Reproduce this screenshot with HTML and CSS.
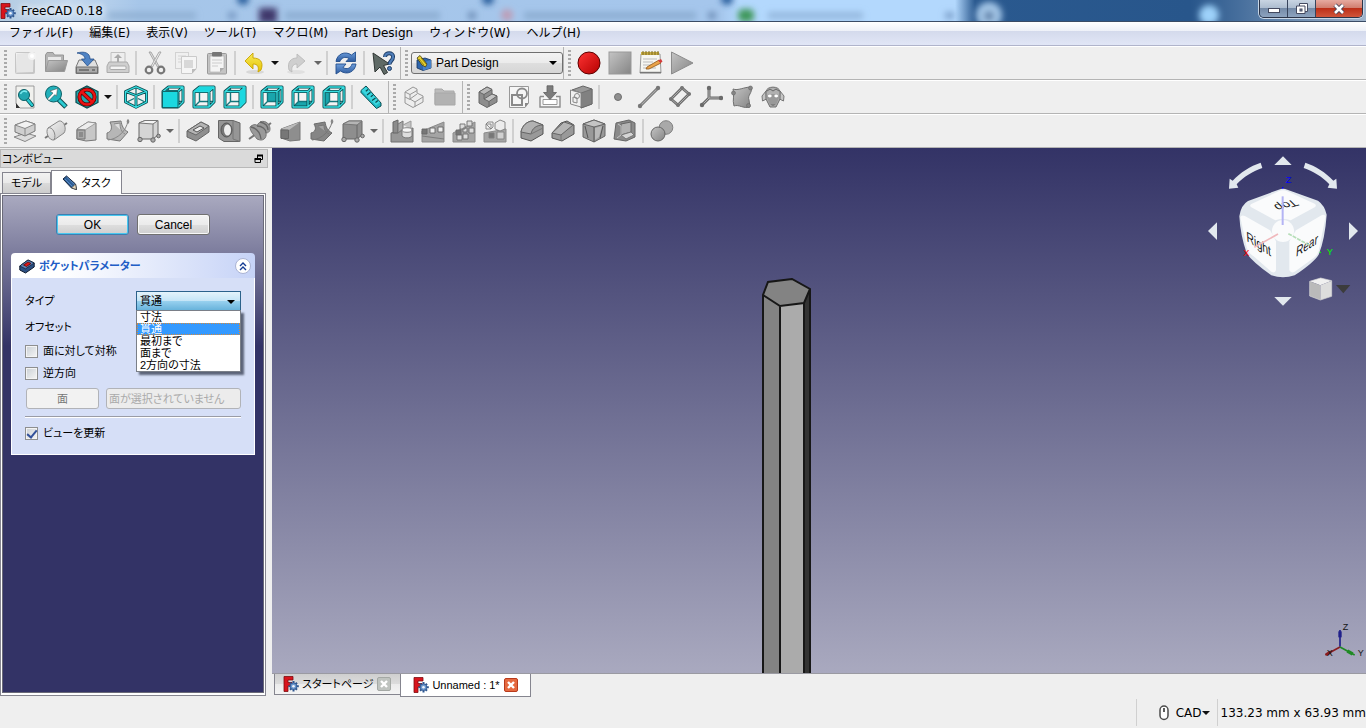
FILE: index.html
```html
<!DOCTYPE html>
<html lang="ja">
<head>
<meta charset="utf-8">
<title>FreeCAD 0.18</title>
<link rel="stylesheet" href="styles.css">
</head>
<body>
<svg class="defs" aria-hidden="true">
  <defs>
    <linearGradient id="gGrey" x1="0" y1="0" x2="1" y2="1"><stop offset="0" stop-color="#c4c4c4"/><stop offset="1" stop-color="#858585"/></linearGradient>
    <linearGradient id="gLight" x1="0" y1="0" x2="1" y2="1"><stop offset="0" stop-color="#f4f4f4"/><stop offset="1" stop-color="#c2c2c2"/></linearGradient>
    <linearGradient id="gRed" x1="0" y1="0" x2="1" y2="1"><stop offset="0" stop-color="#ff3434"/><stop offset="1" stop-color="#b40000"/></linearGradient>
    <linearGradient id="gBlue" x1="0" y1="0" x2="0" y2="1"><stop offset="0" stop-color="#6f9fdc"/><stop offset="1" stop-color="#2c5a9e"/></linearGradient>
    <linearGradient id="gYellow" x1="0" y1="0" x2="0" y2="1"><stop offset="0" stop-color="#f7ea5c"/><stop offset="1" stop-color="#e6c400"/></linearGradient>
    <symbol id="frame" viewBox="0 0 24 24">
      <g fill="none" stroke-linejoin="round">
        <path d="M7.500 4V16.500H21M3 21L7.500 16.500" stroke="#14777c" stroke-width="1.400"/>
        <path d="M2 6.500L7.500 2H22V17L17 22H2ZM2 6.500H17V22M17 6.500L22 2" stroke="#0a4a4e" stroke-width="3"/>
        <path d="M2 6.500L7.500 2H22V17L17 22H2ZM2 6.500H17V22M17 6.500L22 2" stroke="#36dfe2" stroke-width="1.300"/>
      </g>
    </symbol>
    <symbol id="logo" viewBox="0 0 16 16">
      <path d="M1 .5H10V4H5V6.500H9V10H5V15.500H1Z" fill="#d8141c" stroke="#7c0d10" stroke-width=".8"/>
      <g stroke="#2e568f" stroke-width="2"><path d="M10.500 5V15.500M5.500 10.200H15.800M7 6.700L14 13.800M14 6.700L7 13.800"/></g>
      <circle cx="10.500" cy="10.200" r="3.300" fill="#6b97ce" stroke="#2e568f" stroke-width=".8"/><circle cx="10.500" cy="10.200" r="1.300" fill="#eef3fa"/>
    </symbol>
    <symbol id="closeX" viewBox="0 0 10 10"><path d="M2 2L8 8M8 2L2 8" stroke="#fff" stroke-width="2.400"/></symbol>
  </defs>
</svg>

<header class="titlebar">
  <svg class="glass" aria-hidden="true">
    <defs><filter id="soft" x="-20%" y="-60%" width="140%" height="220%"><feGaussianBlur stdDeviation="3"/></filter></defs>
    <g filter="url(#soft)">
      <circle cx="243" cy="-1" r="6" fill="#2c5f9d"/><circle cx="488" cy="-1" r="6" fill="#2c5f9d"/><circle cx="727" cy="-1" r="6" fill="#2c5f9d"/>
      <rect x="259" y="8" width="18" height="15" fill="#3f386c"/>
      <rect x="108" y="12" width="88" height="7" fill="#86a6cb" opacity=".7"/><rect x="228" y="12" width="8" height="7" fill="#7799c2"/>
      <rect x="285" y="12" width="155" height="7" fill="#86a6cb" opacity=".8"/><rect x="468" y="12" width="8" height="7" fill="#6f8fb8"/>
      <circle cx="507" cy="15" r="6" fill="#bd9db6"/><rect x="524" y="12" width="172" height="7" fill="#86a6cb" opacity=".8"/><rect x="708" y="12" width="8" height="7" fill="#6f8fb8"/>
      <rect x="738" y="9" width="16" height="13" rx="5" fill="#3f985c"/><rect x="768" y="12" width="95" height="7" fill="#8db0d6" opacity=".8"/><rect x="945" y="12" width="9" height="7" fill="#7fa3cd"/>
      <circle cx="989" cy="15" r="13" fill="#a5c7e8"/><circle cx="989" cy="16" r="5" fill="#5e80a8"/>
      <circle cx="1209" cy="15" r="10" fill="#9dd2fa"/>
    </g>
  </svg>
  <svg class="app-logo" viewBox="0 0 16 16" aria-hidden="true"><use href="#logo"/></svg>
  <span class="app-title">FreeCAD 0.18</span>
  <div class="win-buttons">
    <button class="win" aria-label="最小化"><svg viewBox="0 0 14 12"><rect x="1.500" y="5.500" width="11" height="4" fill="#fff" stroke="#444a60"/></svg></button>
    <button class="win" aria-label="元に戻す"><svg viewBox="0 0 14 12"><path d="M4.500 .5H12.500V8.500H10V10.500H1.500V3H4.500Z" fill="#fff" stroke="#444a60"/><path d="M4.500 3H10V8.500" fill="none" stroke="#444a60"/><rect x="5" y="6" width="2" height="2" fill="#8b9cb4" stroke="#444a60"/></svg></button>
    <button class="win win-close" aria-label="閉じる"><svg viewBox="0 0 14 12"><path d="M3 2L11 10M11 2L3 10" stroke="#474258" stroke-width="4.400"/><path d="M3 2L11 10M11 2L3 10" stroke="#fff" stroke-width="2.600"/></svg></button>
  </div>
</header>

<nav class="menubar">
  <button>ファイル(F)</button><button>編集(E)</button><button>表示(V)</button><button>ツール(T)</button><button>マクロ(M)</button><button>Part Design</button><button>ウィンドウ(W)</button><button>ヘルプ(H)</button>
</nav>

<div class="toolrow">
  <div class="toolbar">
    <i class="grip"></i>
    <button class="tool" aria-label="新規" disabled><svg viewBox="0 0 24 24"><rect x="2.500" y="1.500" width="19" height="21" rx="1" fill="url(#gLight)" stroke="#c6c6c6"/><rect x="4" y="3" width="16" height="18" fill="#e6e6e6"/><circle cx="19" cy="5" r="4" fill="#f3f3f3"/><circle cx="19" cy="5" r="2" fill="#fff"/></svg></button>
    <button class="tool" aria-label="開く" disabled><svg viewBox="0 0 24 24"><path d="M1.500 20V4L3 1.500H9L10.500 4H19.500V20Z" fill="#b4b4b4" stroke="#969696"/><path d="M4 6H17V12H4Z" fill="#e8e8e8"/><path d="M4.500 9.500H23.500L20.500 20.500H1.500Z" fill="url(#gGrey)" stroke="#999"/></svg></button>
    <button class="tool" aria-label="保存"><svg viewBox="0 0 24 24"><path d="M4 9H20L23 16V22.500H1V16Z" fill="#e0e0e0" stroke="#777"/><path d="M1.500 16H22.500V22H1.500Z" fill="#aaa" stroke="#6f6f6f"/><path d="M4 19H14M17 19H20" stroke="#666" stroke-width="1.500"/><path d="M2 2C9 0 15 1.500 15 8H19L12.500 15L6.500 8H10C10 4.500 6 2.500 2 2Z" fill="#4f83c4" stroke="#244f8c" stroke-width=".8"/></svg></button>
    <button class="tool" aria-label="印刷" disabled><svg viewBox="0 0 24 24"><path d="M5 1.500H19V13H5Z" fill="#eee" stroke="#c0c0c0"/><path d="M12 3L8 7H11V11H13V7H16Z" fill="#aaa"/><path d="M3 11H21L23 15V21.500H1V15Z" fill="#cfcfcf" stroke="#aaa"/><rect x="4" y="15" width="16" height="3.500" rx="1" fill="#f3f3f3" stroke="#aaa"/></svg></button>
    <i class="sep"></i>
    <button class="tool" aria-label="切り取り" disabled><svg viewBox="0 0 24 24"><path d="M6 1L14.500 16L17 17L8 1Z" fill="#ddd" stroke="#999" stroke-width=".8"/><path d="M18 1L9.500 16L7 17L16 1Z" fill="#eee" stroke="#999" stroke-width=".8"/><circle cx="6" cy="19" r="3.300" fill="none" stroke="#777" stroke-width="2.200"/><circle cx="18" cy="19" r="3.300" fill="none" stroke="#777" stroke-width="2.200"/></svg></button>
    <button class="tool" aria-label="コピー" disabled><svg viewBox="0 0 24 24"><rect x="1.500" y="1.500" width="13" height="16" fill="#f0f0f0" stroke="#d2d2d2"/><path d="M4 5H12M4 8H12M4 11H9" stroke="#d4d4d4"/><path d="M7.500 5.500H22.500V17L18 22.500H7.500Z" fill="#f5f5f5" stroke="#cacaca"/><rect x="10" y="9" width="9" height="8" fill="#d8d8d8"/><path d="M18 22.500V18H22.500Z" fill="#bbb"/></svg></button>
    <button class="tool" aria-label="貼り付け" disabled><svg viewBox="0 0 24 24"><rect x="2.500" y="2.500" width="19" height="20.500" rx="1" fill="#c4c4c4" stroke="#999"/><path d="M5 5H19V17L15 21H5Z" fill="#f4f4f4" stroke="#aaa" stroke-width=".6"/><path d="M7 9H17M7 12H17M7 15H13" stroke="#ccc"/><rect x="7" y="1" width="10" height="4.500" rx="1" fill="#777"/><path d="M15 21V17H19Z" fill="#aaa"/></svg></button>
    <i class="sep"></i>
    <button class="tool" aria-label="元に戻す"><svg viewBox="0 0 24 24"><ellipse cx="13" cy="21" rx="9" ry="2" fill="#d8d8d8"/><path d="M3 10L11 2V7C18 7 22 11 19 19L16 21C17 16 16 13 11 13V18Z" fill="url(#gYellow)" stroke="#c9a400" stroke-width=".9"/></svg></button>
    <button class="drop" aria-label="元に戻す履歴"></button>
    <button class="tool" aria-label="やり直し" disabled><svg viewBox="0 0 24 24"><ellipse cx="11" cy="21" rx="9" ry="2" fill="#e0e0e0"/><path d="M20 10L12 3V7C6 7 2 11 4 19L7 21C6 16 8 13 12 13V17Z" fill="#cfcfcf" stroke="#bababa" stroke-width=".9"/></svg></button>
    <button class="drop faded" aria-label="やり直し履歴"></button>
    <i class="sep"></i>
    <button class="tool" aria-label="更新"><svg viewBox="0 0 24 24"><g fill="url(#gBlue)" stroke="#244f8c" stroke-width=".9" stroke-linejoin="round"><path d="M2 10.500C3 3 11 -.5 17.500 4L21.500 1V10.500H12L15 7.500C11 5 7 7 6 10.500Z"/><path d="M22 13C21 21 13 24.500 6.500 20L2 23V13H12L9 16.500C13 19 17 17 18 13Z"/></g></svg></button>
    <i class="sep"></i>
    <button class="tool" aria-label="ヘルプ"><svg viewBox="0 0 24 24"><path d="M2 2L4 21L9 16L13 23.500L16.500 21.500L12.500 14.500L18.500 13Z" fill="#5f6a66" stroke="#303634"/><path d="M14 6C14 1 22.500 1 22 6C22 10 18.500 9.500 18.500 13.500" fill="none" stroke="#1e3d66" stroke-width="4"/><path d="M14 6C14 1 22.500 1 22 6C22 10 18.500 9.500 18.500 13.500" fill="none" stroke="#4f7db8" stroke-width="2.200"/><circle cx="18.500" cy="17.500" r="2" fill="#4f7db8" stroke="#1e3d66"/></svg></button>
  </div>
  <div class="toolbar flush">
    <i class="grip"></i>
    <div class="workbench">
      <svg viewBox="0 0 16 16" aria-hidden="true"><path d="M1 5L9 3L15 5V13L7 15.500L1 13Z" fill="#2f66ac" stroke="#13305c" stroke-width=".8"/><path d="M7 7.500V15.500L15 13V5Z" fill="#4581c8"/><path d="M1 3L4 .5L11 9L9.500 12L6 10Z" fill="#e8d232" stroke="#3b3510" stroke-width=".8"/><path d="M3 4L8 10M5 3L10 9" stroke="#7a6b00" stroke-width=".7"/></svg>
      <select aria-label="ワークベンチ"><option>Part Design</option></select>
    </div>
  </div>
  <div class="toolbar last">
    <i class="grip"></i>
    <button class="tool" aria-label="マクロ記録"><svg viewBox="0 0 24 24"><circle cx="12" cy="12" r="11" fill="url(#gRed)" stroke="#5c0000"/></svg></button>
    <button class="tool" aria-label="停止" disabled><svg viewBox="0 0 24 24"><rect x="1" y="1" width="22" height="22" fill="url(#gGrey)" stroke="#999"/></svg></button>
    <button class="tool" aria-label="マクロ"><svg viewBox="0 0 24 24"><path d="M2 3H21L22 22H1Z" fill="#f6f6f2" stroke="#999"/><path d="M2 1H20V4H2Z" fill="#c6ab45"/><path d="M4 0V4M7 0V4M10 0V4M13 0V4M16 0V4M19 0V4" stroke="#7d6a20"/><path d="M4 8H18M4 11H14M4 14H12M4 17H17" stroke="#bbb"/><path d="M8 16L20 9L22 12L10 18L7 18Z" fill="#eba349" stroke="#8d5518" stroke-width=".8"/><path d="M19 9.500L22 8L23.500 10.500L21.500 12Z" fill="#d43b3b"/><path d="M1 21.500H22" stroke="#777" stroke-width="1.400"/></svg></button>
    <button class="tool" aria-label="実行" disabled><svg viewBox="0 0 24 24"><path d="M1.500 1V23L23 12Z" fill="url(#gGrey)" stroke="#8c8c8c"/></svg></button>
  </div>
</div>

<div class="toolrow">
  <div class="toolbar">
    <i class="grip"></i>
    <button class="tool" aria-label="全て表示"><svg viewBox="0 0 24 24"><path d="M3 1H21V23H7L3 19Z" fill="#f1f1ee" stroke="#888" stroke-width=".8"/><path d="M3 18L7 23H3Z" fill="#333"/><path d="M14 14L19 20" stroke="#0b4c50" stroke-width="4" stroke-linecap="round"/><path d="M14 14L19 20" stroke="#2bcbd2" stroke-width="2.400" stroke-linecap="round"/><circle cx="11" cy="10" r="5.500" fill="#22a6b0" stroke="#0b5f66"/><path d="M7.500 9C8.500 6 12 5.500 14 7" fill="none" stroke="#7ae8ee" stroke-width="1.600"/></svg></button>
    <button class="tool" aria-label="選択部分を表示"><svg viewBox="0 0 24 24"><path d="M14 14L22 22" stroke="#0b4c50" stroke-width="5"/><path d="M14.500 14.500L21.500 21.500" stroke="#2bcbd2" stroke-width="3"/><circle cx="9.500" cy="9" r="8" fill="#22b0ba" stroke="#0b5f66"/><path d="M3.500 14L9 8L6 6L13.500 3.500L12.500 11L10.800 9.600L5 15.500Z" fill="#fff" stroke="#444" stroke-width=".5"/></svg></button>
    <button class="tool" aria-label="描画スタイル"><svg viewBox="0 0 24 24"><path d="M12 1L23 6.500V17.500L12 23L1 17.500V6.500Z" fill="#20a8ad" stroke="#0a4a4e" stroke-width="1.200"/><circle cx="12" cy="12" r="7.600" fill="none" stroke="#5b0000" stroke-width="4"/><path d="M6.800 7L17.200 17" stroke="#5b0000" stroke-width="4"/><circle cx="12" cy="12" r="7.600" fill="none" stroke="#ea1212" stroke-width="2.500"/><path d="M6.800 7L17.200 17" stroke="#ea1212" stroke-width="2.500"/></svg></button>
    <button class="drop" aria-label="スタイル一覧"></button>
    <i class="sep"></i>
    <button class="tool" aria-label="アイソメトリック"><svg viewBox="0 0 24 24"><g fill="none" stroke-linejoin="round"><path d="M12 3V13M3 17L10 13.500M21 17L14 13.500" stroke="#14777c" stroke-width="1.300"/><path d="M12 1.800L22.500 6.500V17L12 22.300L1.500 17V6.500ZM1.500 6.500L12 10.500L22.500 6.500M12 10.500V22.300" stroke="#0a4a4e" stroke-width="2.900"/><path d="M12 1.800L22.500 6.500V17L12 22.300L1.500 17V6.500ZM1.500 6.500L12 10.500L22.500 6.500M12 10.500V22.300" stroke="#36dfe2" stroke-width="1.300"/></g></svg></button>
    <i class="sep"></i>
    <button class="tool" aria-label="前面"><svg viewBox="0 0 24 24"><use href="#frame"/><path d="M1.500 6.500H17V22.500H1.500Z" fill="#1bd8e0" stroke="#0a4a4e" stroke-width=".8"/></svg></button>
    <button class="tool" aria-label="上面"><svg viewBox="0 0 24 24"><path d="M3 8H16V21H3ZM18 7L21 4V16L18 20Z" fill="#f4f4f4"/><use href="#frame"/><path d="M2 6.500L7.500 2H22L17 6.500Z" fill="#1bd8e0"/></svg></button>
    <button class="tool" aria-label="右面"><svg viewBox="0 0 24 24"><path d="M3 8H16V21H3Z" fill="#f4f4f4"/><use href="#frame"/><path d="M17 6.500L22 2V17L17 22Z" fill="#1bd8e0"/></svg></button>
    <i class="sep"></i>
    <button class="tool" aria-label="背面"><svg viewBox="0 0 24 24"><path d="M3 8H16V21H3Z" fill="#f4f4f4"/><path d="M7.500 5H20V16.500H7.500Z" fill="#19a5ac"/><use href="#frame"/></svg></button>
    <button class="tool" aria-label="底面"><svg viewBox="0 0 24 24"><path d="M3 8H16V21H3Z" fill="#f4f4f4"/><path d="M2 22L7.500 16.500H20L16 22Z" fill="#19a5ac"/><use href="#frame"/></svg></button>
    <button class="tool" aria-label="左面"><svg viewBox="0 0 24 24"><path d="M7 8H16V21H7Z" fill="#f4f4f4"/><path d="M2 7L7.500 2.500V16.500L2 22.300Z" fill="#19a5ac"/><use href="#frame"/></svg></button>
    <i class="sep"></i>
    <button class="tool" aria-label="計測"><svg viewBox="0 0 24 24"><path d="M7 1L22 18V21L17.500 23.500L2 7.500V5.500Z" fill="#1fb9c4" stroke="#0a4a4e"/><path d="M7 2L21 17.500L17 20.500L2.500 5.500Z" fill="#3bd6df"/><path d="M9 4.500L6.800 6.200M11.500 7.300L8 10M14 10L11.800 11.700M16.500 13L13 15.500M19 15.500L16.500 17.500" stroke="#0a4a4e" stroke-width="1.200"/></svg></button>
  </div>
  <div class="toolbar">
    <i class="grip"></i>
    <button class="tool" aria-label="パート" disabled><svg viewBox="0 0 24 24"><g fill="#ededed" stroke="#969696" stroke-linejoin="round"><path d="M3 7L11 2L15 4V8L21 11V17L11 22.500L3 18Z"/><path d="M3 7L8 9.500L15 5.500M8 9.500V14L13 17L21 12M13 17V22M8 14L15 9M3 12L8 14.500"/></g></svg></button>
    <button class="tool" aria-label="グループ" disabled><svg viewBox="0 0 24 24"><path d="M2 19V4H9L11 6H21V19Z" fill="#bcbcbc" stroke="#a8a8a8"/><path d="M2 8H22V20H2Z" fill="#b2b2b2" stroke="#a8a8a8"/></svg></button>
  </div>
  <div class="toolbar last">
    <i class="grip"></i>
    <button class="tool" aria-label="ボディー" disabled><svg viewBox="0 0 24 24"><g stroke="#666" stroke-linejoin="round"><path d="M3 7L11 2L16 4.500V9L21 11V17L11 22.500L3 18Z" fill="#8d8d8d"/><path d="M3 7L11 2L16 4.500L8 9.500Z" fill="#b9b9b9"/><path d="M8 14L16 9L21 11L13 16.500Z" fill="#c5c5c5"/><path d="M13 16.500V21.500M8 9.500V14" fill="none"/></g></svg></button>
    <button class="tool" aria-label="スケッチ" disabled><svg viewBox="0 0 24 24"><path d="M2.500 1.500H21.500V18L18 22.500H2.500Z" fill="#f6f6f6" stroke="#999"/><circle cx="15" cy="8.500" r="5" fill="none" stroke="#8a8a8a" stroke-width="1.800"/><rect x="5" y="10" width="10" height="10" fill="none" stroke="#8a8a8a" stroke-width="2"/><path d="M18 22.500V18H21.500Z" fill="#888"/></svg></button>
    <button class="tool" aria-label="編集" disabled><svg viewBox="0 0 24 24"><path d="M2 11.500H6M18 11.500H22V22H2V11.500" fill="#f6f6f6" stroke="#8c8c8c" stroke-width="1.400"/><path d="M5 14.500H19V19.500H5Z" fill="#fff" stroke="#999"/><path d="M9 .8H15V7.500H18.500L12 14.500L5.500 7.500H9Z" fill="#7c7c7c" stroke="#5f5f5f" stroke-width=".8"/></svg></button>
    <button class="tool" aria-label="マッピング" disabled><svg viewBox="0 0 24 24"><path d="M3 5L14 1L23 4V19L12 23V8Z" fill="#9a9a9a" stroke="#666"/><path d="M12 8L23 4V19L12 23Z" fill="#818181" stroke="#666" stroke-width=".7"/><path d="M1.500 5L12 8V22L1.500 19Z" fill="#f0f0f0" stroke="#888"/><circle cx="8" cy="11" r="2.500" fill="none" stroke="#888"/><path d="M4 12L8 13V18L4 17Z" fill="none" stroke="#888"/></svg></button>
    <i class="sep"></i>
    <button class="tool" aria-label="点" disabled><svg viewBox="0 0 24 24"><circle cx="12" cy="12" r="3.500" fill="#8f8f8f" stroke="#707070"/></svg></button>
    <button class="tool" aria-label="線" disabled><svg viewBox="0 0 24 24"><path d="M3 21L21 3" stroke="#666" stroke-width="3"/><path d="M3 21L21 3" stroke="#aaa" stroke-width="1.200"/><circle cx="3" cy="21" r="2.200" fill="#777"/><circle cx="21" cy="3" r="2.200" fill="#777"/></svg></button>
    <button class="tool" aria-label="面" disabled><svg viewBox="0 0 24 24"><path d="M3 14L14 3L21 9L10 20Z" fill="#f0f0f0" stroke="#6d6d6d" stroke-width="2.800"/><path d="M3 14L14 3L21 9L10 20Z" fill="none" stroke="#aaa"/><g fill="#777"><circle cx="3" cy="14" r="2"/><circle cx="14" cy="3" r="2"/><circle cx="21" cy="9" r="2"/><circle cx="10" cy="20" r="2"/></g></svg></button>
    <button class="tool" aria-label="座標系" disabled><svg viewBox="0 0 24 24"><path d="M10 13V3M10 13L22 13M10 13L3 20" stroke="#6a6a6a" stroke-width="3"/><path d="M10 13V3M10 13L22 13M10 13L3 20" stroke="#b0b0b0"/><g fill="#6a6a6a"><circle cx="10" cy="3" r="2.200"/><circle cx="22" cy="13" r="2.200"/><circle cx="3" cy="20" r="2.200"/></g></svg></button>
    <button class="tool" aria-label="シェイプバインダー" disabled><svg viewBox="0 0 24 24"><path d="M3 4C8 6 14 2 21 2C23 8 17 10 19 15L20 22C13 24 9 19 4 21C2 15 5 9 3 4Z" fill="url(#gGrey)" stroke="#707070"/><g fill="#858585" stroke="#666" stroke-width=".6"><circle cx="3.500" cy="8" r="2"/><circle cx="20.500" cy="3" r="2"/><circle cx="18.500" cy="20.500" r="2"/></g></svg></button>
    <button class="tool" aria-label="クローン" disabled><svg viewBox="0 0 24 24"><path d="M5 6L1 11L1.500 16L5.500 14ZM19 6L23 11L22.500 16L18.500 14Z" fill="#c4c4c4" stroke="#777"/><path d="M5 7C5 .5 19 .5 19 7L19 14L15 22H9L5 14Z" fill="#b0b0b0" stroke="#6e6e6e"/><path d="M7 9H17L18 13L15 20L12 21.500L9 20L6 13Z" fill="#999"/><ellipse cx="8.800" cy="11" rx="1.900" ry="1.400" fill="#fff"/><ellipse cx="15.200" cy="11" rx="1.900" ry="1.400" fill="#fff"/><path d="M10.500 19L12 20.500L13.500 19M6 6L9 4L12 6L15 4L18 6" fill="none" stroke="#666"/></svg></button>
  </div>
</div>

<div class="toolrow">
  <div class="toolbar last">
    <i class="grip"></i>
    <button class="tool" aria-label="パッド" disabled><svg viewBox="0 0 24 24"><path d="M1 18L13 14L23 17L12 22.500ZM5 15L14 12" fill="#ddd" stroke="#888"/><path d="M2 6L13 2L22 5V12L12 17L2 13Z" fill="#cfcfcf" stroke="#777"/><path d="M2 6L13 2L22 5L12 9.500Z" fill="#f2f2f2" stroke="#888"/><path d="M12 9.500V17" stroke="#888"/></svg></button>
    <button class="tool" aria-label="レボリューション" disabled><svg viewBox="0 0 24 24"><path d="M1 19L23 4" stroke="#777" stroke-width="2"/><path d="M4 9L15 2C20 1 23 10 20 14L10 21C5 22 1 13 4 9Z" fill="url(#gLight)" stroke="#888"/><path d="M4 9C8 7 13 15 10 21" fill="none" stroke="#888"/></svg></button>
    <button class="tool" aria-label="ロフト" disabled><svg viewBox="0 0 24 24"><path d="M2 10L13 3L21 4V21L11 22L2 20Z" fill="#c7c7c7" stroke="#777"/><path d="M2 10L13 3L21 4L10 11Z" fill="#ededed" stroke="#888" stroke-width=".7"/><path d="M2 11H10V20H2Z" fill="#aaa" stroke="#777"/><path d="M4 13H8V18H4Z" fill="#8b8b8b"/></svg></button>
    <button class="tool" aria-label="パイプ" disabled><svg viewBox="0 0 24 24"><path d="M4 3L15 2C16 7 17 10 22 13L14 22L1 20V14C5 13 7 9 4 3Z" fill="#b6b6b6" stroke="#777"/><path d="M8 5L14 4C14 9 15 13 19 15" fill="#ddd" stroke="#888"/><path d="M2 21C12 20 20 12 22 2" fill="none" stroke="#888"/><ellipse cx="22" cy="2.500" rx="1.300" ry="2.300" fill="#888"/></svg></button>
    <button class="tool" aria-label="プリミティブ" disabled><svg viewBox="0 0 24 24"><path d="M2 4L8 1.500H21V16L16 20H2Z" fill="#d5d5d5" stroke="#666"/><path d="M2 4L8 1.500H21L16 5Z" fill="#f4f4f4" stroke="#777"/><path d="M16 5V20" stroke="#777"/><g fill="#aaa" stroke="#666"><circle cx="3" cy="20.500" r="2.200"/><circle cx="16" cy="21" r="2.200"/><circle cx="21.500" cy="17" r="1.800"/></g></svg></button>
    <button class="drop faded" aria-label="加算一覧"></button>
    <i class="sep"></i>
    <button class="tool" aria-label="ポケット" disabled><svg viewBox="0 0 24 24"><path d="M1 12L15 3L23 7V13L10 22L1 18Z" fill="#8f8f8f" stroke="#666"/><path d="M1 12L15 3L23 7L10 16Z" fill="#b4b4b4" stroke="#666"/><path d="M7 11L14 7L18 9L11 13Z" fill="#eee" stroke="#555"/></svg></button>
    <button class="tool" aria-label="ホール" disabled><svg viewBox="0 0 24 24"><path d="M1.500 1.500H16L23 4V22.500H7L1.500 19Z" fill="#969696" stroke="#666"/><path d="M16 1.500V20L23 22.500" fill="none" stroke="#777"/><ellipse cx="9.500" cy="11" rx="5.500" ry="7" fill="#777" stroke="#555"/><ellipse cx="10.500" cy="11" rx="3.500" ry="5.500" fill="#efefef"/></svg></button>
    <button class="tool" aria-label="グルーブ" disabled><svg viewBox="0 0 24 24"><path d="M1 20L23 4" stroke="#777" stroke-width="2"/><path d="M2 8C5 5 9 5 9 7C11 1 18 1 21 6C23 10 22 14 18 14C19 19 15 23 9 20C7 17 2 13 2 8Z" fill="#9a9a9a" stroke="#777"/><path d="M3 8C8 9 12 13 13 20M9 7C14 7 18 10 18 14M12 3C17 4 20 7 20 11" fill="none" stroke="#666" stroke-width="1.300"/></svg></button>
    <button class="tool" aria-label="減算ロフト" disabled><svg viewBox="0 0 24 24"><path d="M2 10L21 3V21L11 22L2 19Z" fill="#8e8e8e" stroke="#777"/><path d="M2 10L21 3L10 11Z" fill="#bbb"/><path d="M2 11H9.500V19.500H2Z" fill="#777" stroke="#666"/></svg></button>
    <button class="tool" aria-label="減算パイプ" disabled><svg viewBox="0 0 24 24"><path d="M4 5L15 3C16 8 17 11 22 14L14 22L1 20V14C5 13 7 10 4 5Z" fill="#858585" stroke="#6c6c6c"/><path d="M8 7L14 6C14 10 15 13 19 15" fill="#a5a5a5" stroke="#777"/><path d="M2 21C12 20 20 12 22 3" fill="none" stroke="#777"/><ellipse cx="22" cy="2.500" rx="1.300" ry="2.300" fill="#888"/></svg></button>
    <button class="tool" aria-label="減算プリミティブ" disabled><svg viewBox="0 0 24 24"><path d="M2 5L8 2H21V16L16 20H2Z" fill="#8e8e8e" stroke="#666"/><path d="M2 5L8 2H21L16 6Z" fill="#b5b5b5" stroke="#777"/><path d="M16 6V20" stroke="#666"/><g fill="#aaa" stroke="#666"><circle cx="3" cy="20.500" r="2.200"/><circle cx="16" cy="21" r="2.200"/><circle cx="21.500" cy="17" r="1.800"/></g></svg></button>
    <button class="drop faded" aria-label="減算一覧"></button>
    <i class="sep"></i>
    <button class="tool" aria-label="鏡像" disabled><svg viewBox="0 0 24 24"><path d="M1 14L23 9V23H1Z" fill="#979797" stroke="#707070"/><path d="M3 3L8 1V14H3Z" fill="#8c8c8c" stroke="#666"/><path d="M8 5L13 2V10L8 14Z" fill="#aaa" stroke="#777"/><path d="M13 6L21 2V10" fill="#c5c5c5" stroke="#999"/><path d="M12 11V17C14 19.500 20 19.500 22 17V11Z" fill="#ddd" stroke="#777"/><ellipse cx="17" cy="11" rx="5" ry="2.300" fill="#f6f6f6" stroke="#888"/></svg></button>
    <button class="tool" aria-label="直線状パターン" disabled><svg viewBox="0 0 24 24"><path d="M1 12L23 3V23H1Z" fill="#a4a4a4" stroke="#8b8b8b"/><path d="M1 17L23 20" stroke="#7c7c7c"/><g stroke="#666" stroke-width=".9"><path d="M1 10H6V15H1Z" fill="#777"/><path d="M9 9H14V14H9ZM17 8H22V13H17Z" fill="#eee"/></g></svg></button>
    <button class="tool" aria-label="円状パターン" disabled><svg viewBox="0 0 24 24"><path d="M1 14L23 3V23H1Z" fill="#a4a4a4" stroke="#8b8b8b"/><g stroke="#6d6d6d" stroke-width=".9"><path d="M4 11H9V16H4Z" fill="#777"/><path d="M8 5H13V10H8ZM15 2H20V7H15ZM17 9H22V14H17ZM11 15H16V20H11ZM5 16H10V21H5ZM11 9H15V13H11Z" fill="#ddd"/></g></svg></button>
    <button class="tool" aria-label="マルチ変換" disabled><svg viewBox="0 0 24 24"><path d="M1 14L23 10V23H1Z" fill="#a4a4a4" stroke="#8b8b8b"/><g stroke="#808080" stroke-width=".9"><path d="M3 5H8V10H3ZM3 5L5 3H10V8L8 10Z" fill="#eee"/><path d="M12 4L17 1L22 3V10L17 12L12 10Z" fill="#ececec"/><path d="M14 13H21V20H14Z" fill="#d0d0d0"/><path d="M6 14H11V19H6Z" fill="#777"/></g></svg></button>
    <i class="sep"></i>
    <button class="tool" aria-label="フィレット" disabled><svg viewBox="0 0 24 24"><path d="M1 13C2 7 7 2 13 2L23 6V15L11 22L1 19Z" fill="#999" stroke="#555"/><path d="M1 13C2 7 7 2 13 2L23 6C17 6 12 9 11 15Z" fill="#b2b2b2" stroke="#666"/><path d="M11 15L23 9" stroke="#777"/></svg></button>
    <button class="tool" aria-label="面取り" disabled><svg viewBox="0 0 24 24"><path d="M1 14L10 4L16 2L23 6V15L11 22L1 19Z" fill="#999" stroke="#555"/><path d="M1 14L13 3L22 6L10 16Z" fill="#b5b5b5" stroke="#666"/><path d="M10 16V22" stroke="#777"/></svg></button>
    <button class="tool" aria-label="抜き勾配" disabled><svg viewBox="0 0 24 24"><path d="M1 5L12 1L23 5V17L12 23L1 18Z" fill="#999" stroke="#666"/><path d="M1 5L12 8L23 5L12 1Z" fill="#c4c4c4" stroke="#666"/><path d="M12 8V23M3 7L6 19M21 7L18 19" stroke="#555" fill="none"/><path d="M13 9L20 7L17 18L13 21Z" fill="#b9b9b9"/></svg></button>
    <button class="tool" aria-label="厚み" disabled><svg viewBox="0 0 24 24"><path d="M3 4L16 1L22 4V18L13 22L1 20Z" fill="#8a8a8a" stroke="#666"/><path d="M8 5L18 3V13L8 16Z" fill="#b3b3b3" stroke="#666"/><path d="M8 16L18 13L21 16L13 20Z" fill="#d5d5d5" stroke="#777"/><path d="M5 5L8 7V16L4 19" fill="none" stroke="#c5c5c5"/></svg></button>
    <i class="sep"></i>
    <button class="tool" aria-label="ブーリアン" disabled><svg viewBox="0 0 24 24"><circle cx="16" cy="8.500" r="6.800" fill="#a9a9a9" stroke="#808080"/><circle cx="8" cy="15" r="7" fill="url(#gGrey)" stroke="#666"/></svg></button>
  </div>
</div>

<main class="workspace">
  <aside class="dock">
    <div class="dock-title"><span>コンボビュー</span><button aria-label="フロート"><svg viewBox="0 0 10 10"><path d="M3.500 4V1.500H8.500V5.500H7M1 5.500H6.500V8.500H1Z" fill="none" stroke="#000"/><path d="M3 1.500H9M.5 5H7" stroke="#000" stroke-width="2"/></svg></button></div>
    <div class="dock-tabs" role="tablist">
      <button class="dock-tab" role="tab">モデル</button>
      <button class="dock-tab active" role="tab"><svg viewBox="0 0 16 16" aria-hidden="true"><path d="M1 4L4.500 1L13.500 9L14.500 14.500L9.500 13Z" fill="#2f5f96" stroke="#13233c"/><path d="M3 4L11 12M5 2.500L13 10" stroke="#5f93cf" stroke-width=".8"/><path d="M9.500 13L13.500 9L14.500 14.500Z" fill="#e3d6bd" stroke="#333" stroke-width=".6"/></svg>タスク</button>
    </div>
    <div class="dock-frame">
      <section class="task-panel">
        <div class="dialog-buttons"><button class="push default">OK</button><button class="push">Cancel</button></div>
        <section class="group">
          <header class="group-head">
            <svg class="group-icon" viewBox="0 0 16 16" aria-hidden="true"><path d="M.8 8L9 2L15.200 5V9L6.500 15L.8 12Z" fill="#2c4f82" stroke="#101c30"/><path d="M.8 8L9 2L15.200 5L6.500 10.800Z" fill="#5c84b8" stroke="#101c30" stroke-width=".7"/><path d="M4.500 7L9 4L12 5.500L7.500 8.500Z" fill="#e01818" stroke="#5c0808" stroke-width=".8"/></svg>
            <h2>ポケットパラメーター</h2>
            <button class="fold" aria-label="折りたたむ"><svg viewBox="0 0 10 10"><path d="M2 5L5 2L8 5M2 9L5 6L8 9" fill="none" stroke="#123a94" stroke-width="1.400"/></svg></button>
          </header>
          <div class="group-body">
            <div class="field">
              <label for="type">タイプ</label>
              <div class="type-box">
                <select id="type"><option>寸法</option><option selected>貫通</option><option>最初まで</option><option>面まで</option><option>2方向の寸法</option></select>
                <ul class="popup" role="listbox">
                  <li role="option">寸法</li><li role="option" class="current" aria-selected="true">貫通</li><li role="option">最初まで</li><li role="option">面まで</li><li role="option">2方向の寸法</li>
                </ul>
              </div>
            </div>
            <div class="field offset">オフセット</div>
            <label class="check symmetric"><input type="checkbox">面に対して対称</label>
            <label class="check reversed"><input type="checkbox">逆方向</label>
            <div class="face-row"><button class="face" disabled>面</button><input class="face-name" type="text" value="面が選択されていません" aria-label="面の名前" disabled></div>
            <hr>
            <label class="check"><input type="checkbox" checked>ビューを更新</label>
          </div>
        </section>
      </section>
    </div>
  </aside>

  <section class="document">
    <div class="viewport">
      <svg class="prism" width="52" height="2400" viewBox="0 0 52 2400" role="img" aria-label="六角柱">
        <path d="M2 17L19 28V2400H2Z" fill="#838383"/><path d="M19 28L43 25V2400H19Z" fill="#ababab"/><path d="M43 25L49 11V2400H43Z" fill="#333"/>
        <path d="M2 17L7 4L31 1L49 11L43 25L19 28Z" fill="#838383"/>
        <path d="M2 2400V17L7 4L31 1L49 11V2400M2 17L19 28L43 25L49 11M19 28V2400M43 25V2400" fill="none" stroke="#171717" stroke-width="2"/>
      </svg>
      <svg class="navcube" viewBox="0 9 528 501" role="img" aria-label="ナビゲーションキューブ">
        <g fill="#e2e8ee">
          <path d="M253 60L279 34L305 60Z"/><path d="M253 456H305L279 482Z"/><path d="M81 232V285L54 258Z"/><path d="M477 232V285L504 258Z"/>
          <path d="M212 53L217 69C190 78 161 95 140 118L145 128L117 131L119 101L128 107C151 82 181 63 212 53Z"/>
          <path d="M346 53L341 69C368 78 397 95 418 118L413 128L441 131L439 101L430 107C407 82 377 63 346 53Z"/>
        </g>
        <path d="M278 126V136" stroke="#00f" stroke-width="4"/>
        <path d="M388 322H393" stroke="#0f0" stroke-width="4"/>
        <path d="M266 134Q279 128 292 134L384 167Q404 181 410 209Q405 282 386 329Q372 352 314 391Q279 403 244 391Q186 350 170 325Q151 270 148 214Q153 180 174 168Z" fill="#e2e8ee"/>
        <path d="M266 139Q279 133 292 139L374 176Q381 181 374 187L302 226Q279 218 256 226L184 187Q177 182 184 177Z" fill="#fafbfc"/>
        <path d="M151 217Q155 208 166 214L240 256Q252 275 258 289V376Q255 386 244 380L191 334Q175 325 170 306Z" fill="#fafbfc"/>
        <path d="M407 214Q403 205 392 212L318 256Q306 275 298 289V376Q303 386 314 380L371 339Q381 333 386 318Z" fill="#fafbfc"/>
        <circle cx="279" cy="258" r="33" fill="#fafbfc"/>
        <text x="287" y="113" class="axis-z">Z</text><text x="160" y="334" class="axis-x">X</text><text x="410" y="331" class="axis-y">Y</text>
        <g class="cube-text"><text transform="matrix(.88 .56 .08 1.200 170 288)">Right</text><text transform="matrix(.84 -.52 -.1 1.200 317 336)">Rear</text><text transform="matrix(-1.080 .3 -.72 -.72 311 163)">Top</text></g>
        <path d="M278 154V240" stroke="#b4b4f4" stroke-width="6"/><path d="M264 267L193 307" stroke="#f0b9bd" stroke-width="5"/><path d="M295 266L362 303" stroke="#b6deb8" stroke-width="5" stroke-dasharray="12 3"/>
        <path d="M359 409L392 399L425 407L391 421Z" fill="#f0f0f0"/><path d="M359 409L391 421V465L359 453Z" fill="#bababa"/><path d="M391 421L425 407V454L391 465Z" fill="#ddd"/><path d="M359 409L392 399L425 407V454L391 465L359 453Z" fill="none" stroke="#d8d8d8" stroke-width="2"/>
        <path d="M438 420H481L460 445Z" fill="#3c3c3c"/>
      </svg>
      <svg class="axes" viewBox="606 30 144 120" role="img" aria-label="座標軸">
        <path d="M672 110V60" stroke="#20208a" stroke-width="5"/><path d="M672 64V82" stroke="#20208a" stroke-width="10"/>
        <path d="M672 111L628 135" stroke="#8a1c20" stroke-width="5"/><path d="M645 125L630 134" stroke="#8a1c20" stroke-width="9"/>
        <path d="M672 111L716 135" stroke="#1f8a24" stroke-width="5"/><path d="M694 123L710 132" stroke="#1f8a24" stroke-width="10"/>
        <g class="axis-labels"><text x="680" y="60">Z</text><text x="632" y="137">X</text><text x="725" y="137">Y</text></g>
      </svg>
    </div>
    <div class="doc-tabs" role="tablist">
      <div class="doc-tab" role="tab"><svg class="doc-logo" viewBox="0 0 16 16" aria-hidden="true"><use href="#logo"/></svg><span>スタートページ</span><button class="doc-close" aria-label="閉じる"><svg viewBox="0 0 10 10"><use href="#closeX"/></svg></button></div>
      <div class="doc-tab active" role="tab"><svg class="doc-logo" viewBox="0 0 16 16" aria-hidden="true"><use href="#logo"/></svg><span>Unnamed : 1*</span><button class="doc-close" aria-label="閉じる"><svg viewBox="0 0 10 10"><use href="#closeX"/></svg></button></div>
    </div>
  </section>
</main>

<footer class="status">
  <button class="nav-style"><svg viewBox="0 0 10 16" aria-hidden="true"><rect x="1" y="1" width="8" height="13.500" rx="4" fill="#fff" stroke="#4c4c4c" stroke-width="1.500"/><path d="M5 3V7" stroke="#333" stroke-width="1.600"/></svg>CAD<i class="tri"></i></button>
  <span class="size">133.23 mm x 63.93 mm</span>
</footer>
</body>
</html>
```
FILE: styles.css
```css
* { box-sizing: border-box; }
html, body { height: 100%; margin: 0; }
body {
  display: flex;
  flex-direction: column;
  overflow: hidden;
  background: #efefef;
  color: #000;
  font: 12px/16px "DejaVu Sans", "Noto Sans CJK JP", sans-serif;
}
button, select, input { font: inherit; font-feature-settings: inherit; color: inherit; margin: 0; }
button { border: 0; padding: 0; background: none; }
svg { display: block; flex: none; }
.defs { position: absolute; width: 0; height: 0; }

/* Title bar */
.titlebar {
  position: relative;
  display: flex;
  align-items: center;
  flex: none;
  height: 22px;
  border-bottom: 1px solid #3b4c66;
  overflow: hidden;
  background: linear-gradient(90deg, #b4cce2 0, #c3d8ee 70px, #a6c6e9 140px, #a5c6ec 720px, #b3d8fd 740px, #b3d8fd 955px, #2a598f 975px, #28568b 1190px, #476f9d 1240px, #9fb4cc 1366px);
}
.glass { position: absolute; inset: 0; width: 100%; height: 22px; }
.app-logo { position: relative; width: 16px; height: 16px; margin-right: 5px; }
.app-title { position: relative; flex: 1; text-shadow: 0 0 6px #fff, 0 0 10px #fff; }
.win-buttons {
  position: relative;
  display: flex;
  align-self: flex-start;
  height: 18px;
  margin-right: 3px;
  border: 1px solid #2b3448;
  border-top: 0;
  border-radius: 0 0 5px 5px;
  overflow: hidden;
  box-shadow: 0 0 0 1px #c8d6e6;
}
.win {
  display: grid;
  place-items: center;
  width: 28px;
  border-right: 1px solid #37445c;
  background: linear-gradient(#c9d5e3, #adbdd0 45%, #7389a6 46%, #8da3bf);
}
.win svg { width: 14px; height: 12px; }
.win-close { width: 46px; border-right: 0; background: linear-gradient(#e6aaa0, #d17f70 45%, #bb2d16 46%, #d0553b); }

/* Menu bar */
.menubar {
  display: flex;
  flex: none;
  gap: 16px;
  height: 24px;
  padding: 0 9px 2px;
  border-bottom: 1px solid #b0b4cb;
  background: linear-gradient(#fff, #eef1f8 38%, #d4daec 40%, #e1e6f6);
}

/* Tool bars */
.toolrow {
  display: flex;
  flex: none;
  height: 34px;
  border-top: 1px solid #fff;
  border-bottom: 1px solid #b4b4b4;
}
.toolbar { display: flex; align-items: center; padding-right: 2px; border-right: 1px solid #b4b4b4; }
.toolbar.flush { padding-right: 0; }
.toolbar.last { flex: 1; border-right: 0; }
.grip {
  width: 3px;
  height: 26px;
  margin: 0 2px 0 4px;
  background: repeating-linear-gradient(#aaa 0, #aaa 2px, transparent 2px, transparent 4px);
}
.tool { display: grid; place-items: center; width: 31px; height: 30px; }
.tool svg { width: 24px; height: 24px; }
.sep { width: 2px; height: 24px; margin: 0 2px; background: #d0d0d0; }
.drop { display: grid; place-items: center; width: 12px; height: 30px; }
.drop::before, .tri { content: ""; border: 4px solid transparent; border-top-color: #111; border-bottom: 0; }
.drop.faded::before { border-top-color: #666; }
.workbench {
  position: relative;
  display: flex;
  align-items: center;
  width: 152px;
  height: 22px;
  margin-left: 1px;
  padding-left: 4px;
  border: 1px solid #707070;
  border-radius: 3px;
  background: linear-gradient(#f3f3f3, #ebebeb 50%, #dedede 51%, #d6d6d6);
  font-family: "Liberation Sans", sans-serif;
}
.workbench svg { width: 16px; height: 16px; }
.workbench select { flex: 1; padding: 0 0 0 4px; }
select { appearance: none; border: 0; border-radius: 0; outline: 0; background: none; }
.workbench::after, .type-box::after {
  content: "";
  position: absolute;
  top: 8px;
  right: 5px;
  border: 4px solid transparent;
  border-top-color: #000;
  border-bottom: 0;
  pointer-events: none;
}

/* Combo view */
.workspace { display: flex; flex: 1; min-height: 0; }
.dock {
  display: flex;
  flex: none;
  flex-direction: column;
  width: 268px;
  margin-right: 4px;
  padding: 1px 0;
  font: 11px/14px "Liberation Sans", "Noto Sans CJK JP", sans-serif;
  font-feature-settings: "palt";
}
.dock-title {
  display: flex;
  align-items: center;
  justify-content: space-between;
  height: 19px;
  padding: 0 3px 0 1px;
  border: 1px solid #b8b8b8;
  background: #dadada;
}
.dock-title svg { width: 10px; height: 10px; }
.dock-tabs { display: flex; align-items: flex-end; height: 25px; padding-left: 2px; }
.dock-tab {
  display: flex;
  align-items: center;
  justify-content: center;
  width: 49px;
  height: 21px;
  border: 1px solid #85858f;
  border-bottom: 0;
  background: linear-gradient(#f2f2f2, #e9e9e9 50%, #dadada 51%, #cdcdcd);
}
.dock-tab.active { z-index: 1; gap: 3px; width: 71px; height: 24px; margin-bottom: -1px; background: #fff; }
.dock-tab svg { width: 16px; height: 16px; }
.dock-frame { display: flex; flex: 1; margin-right: 2px; padding: 1px 1px 2px; border: 1px solid #85858f; background: #fff; }
.task-panel {
  flex: 1;
  min-width: 0;
  padding: 18px 8px;
  border: 1px solid #6a6a78;
  background: linear-gradient(#a9a9bf, #333366 150px);
}
.dialog-buttons { display: flex; justify-content: center; gap: 8px; margin-bottom: 18px; font-size: 12px; }
.push {
  width: 73px;
  height: 21px;
  border: 1px solid #707070;
  border-radius: 3px;
  background: linear-gradient(#f3f3f3, #ebebeb 50%, #dedede 51%, #cfcfcf);
  box-shadow: inset 0 0 0 1px #f8f8f8;
}
.push.default { border-color: #3c7fb1; box-shadow: inset 0 0 0 1px #48c8f0; }
.group-head {
  display: flex;
  align-items: center;
  height: 25px;
  padding: 0 4px 0 8px;
  border-radius: 4px 4px 0 0;
  background: linear-gradient(90deg, #fff, #fff 20%, #c6d3f7);
}
.group-icon { width: 16px; height: 16px; margin-right: 4px; }
.group h2 { flex: 1; margin: 0; color: #215dc6; font-size: 11px; }
.fold { display: grid; place-items: center; width: 16px; height: 16px; border: 1px solid #aab4d4; border-radius: 8px; background: #fff; }
.fold svg { width: 10px; height: 10px; }
.group-body {
  display: flex;
  flex-direction: column;
  padding: 13px 13px 11px;
  border: 1px solid #fff;
  border-top: 0;
  background: #d6dff7;
}
.field { display: flex; align-items: center; justify-content: space-between; height: 20px; }
.offset { margin: 6px 0 4px; }
.type-box { position: relative; width: 105px; height: 20px; border: 1px solid #2c628b; background: linear-gradient(#e4f3fb, #c4e5f6 50%, #98d1ef 51%, #68b3db); }
.type-box select { width: 100%; height: 18px; padding: 0 3px; }
.popup {
  position: absolute;
  z-index: 2;
  top: 18px;
  left: -1px;
  right: -1px;
  margin: 0;
  padding: 0;
  border: 1px solid #7a7f88;
  background: #fff;
  box-shadow: 3px 3px 2px #5c6478;
  list-style: none;
  line-height: 12px;
}
.popup li { padding-left: 3px; }
.popup .current { background: #3399ff; color: #fff; outline: 1px dotted #d68a3c; outline-offset: -1px; }
.check { display: flex; align-items: center; gap: 5px; height: 20px; }
.check input {
  appearance: none;
  display: grid;
  place-items: center;
  width: 13px;
  height: 13px;
  border: 1px solid #8e8f8f;
  background: linear-gradient(135deg, #c9cfd5, #f6f6f6);
  box-shadow: inset 0 0 0 1px #f4f4f4;
}
.check input:checked::before { content: ""; width: 4px; height: 8px; border: solid #32519a; border-width: 0 2px 2px 0; transform: rotate(40deg); }
.reversed { margin: 2px 0 5px; }
.face-row { display: flex; gap: 7px; height: 21px; padding-left: 1px; }
.face, .face-name { border: 1px solid #b1b3b8; border-radius: 3px; background: #f2f2f2; }
.face { flex: none; width: 73px; color: #777; }
.face-name { flex: 1; width: 0; min-width: 0; padding: 0 2px; color: #aaa; background: #ececec; }
.group hr { width: 100%; margin: 7px 0 5px; border: 0; border-top: 1px solid #9a9ca6; border-bottom: 1px solid #fff; }

/* 3D view */
.document { display: flex; flex: 1; flex-direction: column; min-width: 0; }
.viewport {
  position: relative;
  flex: 1;
  overflow: hidden;
  border-bottom: 1px solid #9a9aa2;
  background: linear-gradient(#333366, #a9a9bf);
}
.prism { position: absolute; top: 130px; left: calc(50% - 58px); }
.navcube { position: absolute; top: 0; right: 0; width: 176px; height: 167px; }
.navcube text, .axes text { font: 28px "Liberation Sans", sans-serif; }
.axis-z { fill: #00f; }
.axis-x { fill: #f00; }
.axis-y { fill: #0f0; }
.navcube .cube-text text { font-size: 36px; fill: #151515; }
.axes { position: absolute; right: 0; bottom: 13px; width: 48px; height: 40px; }
.axes text { font-size: 27px; fill: #151515; }
.doc-tabs {
  display: flex;
  align-items: flex-start;
  height: 23px;
  padding-left: 2px;
  font: 11px/14px "Liberation Sans", "Noto Sans CJK JP", sans-serif;
  font-feature-settings: "palt";
}
.doc-tab {
  display: flex;
  align-items: center;
  gap: 3px;
  height: 21px;
  padding: 0 9px 0 8px;
  border: 1px solid #85858f;
  border-top: 0;
  border-right: 0;
  background: linear-gradient(#cfcfcf, #dcdcdc 49%, #ebebeb 50%, #f4f4f4);
}
.doc-tab.active { height: 23px; padding: 0 12px; border-right: 1px solid #85858f; background: #fff; }
.doc-logo { width: 16px; height: 16px; }
.doc-close { display: grid; place-items: center; width: 14px; height: 14px; margin-left: 1px; border: 1px solid #a4a8a4; border-radius: 2px; background: #bfc3bf; }
.active .doc-close { border-color: #b83a1c; background: #e5693f; }
.doc-close svg { width: 10px; height: 10px; }

/* Status bar */
.status { display: flex; flex: none; justify-content: flex-end; height: 31px; padding: 2px 0; overflow: hidden; }
.nav-style { display: flex; align-items: center; padding: 0 7px 0 22px; border-left: 1px solid #d0d0d0; border-right: 1px solid #d0d0d0; }
.nav-style svg { width: 10px; height: 16px; margin-right: 7px; }
.size { align-self: center; padding: 0 0 0 3px; }
```
